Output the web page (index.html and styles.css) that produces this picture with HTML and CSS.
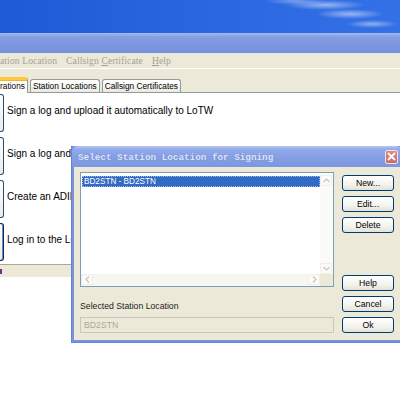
FILE: index.html
```html
<!DOCTYPE html>
<html>
<head>
<meta charset="utf-8">
<link rel="stylesheet" href="styles.css">
</head>
<body>
<div class="desktop"></div>
<div class="window">
  <div class="titlebar"></div>
  <div class="menubar">
    <span class="menu">ation Location</span>
    <span class="menu">Callsign <u>C</u>ertificate</span>
    <span class="menu"><u>H</u>elp</span>
  </div>
  <div class="tabstrip">
    <div class="tab active">rations</div>
    <div class="tab">Station Locations</div>
    <div class="tab">Callsign Certificates</div>
  </div>
  <div class="pane">
    <div class="row"><div class="bigbtn"></div><span class="label">Sign a log and upload it automatically to LoTW</span></div>
    <div class="row"><div class="bigbtn"></div><span class="label">Sign a log and sa</span></div>
    <div class="row"><div class="bigbtn"></div><span class="label">Create an ADIF fi</span></div>
    <div class="row"><div class="bigbtn focus"></div><span class="label">Log in to the Log</span></div>
  </div>
  <div class="statusbar"><span class="mark"></span></div>
</div>

<div class="dialog">
  <div class="dtitle">
    <span class="dtext">Select Station Location for Signing</span>
    <span class="close">
      <svg width="9" height="9" viewBox="0 0 9 9"><path d="M1 1L8 8M8 1L1 8" stroke="#fff" stroke-width="1.8"/></svg>
    </span>
  </div>
  <div class="dbody">
    <div class="leftcol">
      <div class="listbox">
        <div class="items"><div class="item sel">BD2STN - BD2STN</div></div>
        <div class="vscroll">
          <div class="sbtn"><svg width="7" height="5" viewBox="0 0 7 5"><path d="M0.5 4L3.5 1L6.5 4" fill="none" stroke="#c6c6bd" stroke-width="1.2"/></svg></div>
          <div class="strack"></div>
          <div class="sbtn"><svg width="7" height="5" viewBox="0 0 7 5"><path d="M0.5 1L3.5 4L6.5 1" fill="none" stroke="#c6c6bd" stroke-width="1.2"/></svg></div>
        </div>
        <div class="hscroll">
          <div class="sbtn"><svg width="5" height="7" viewBox="0 0 5 7"><path d="M4 0.5L1 3.5L4 6.5" fill="none" stroke="#c6c6bd" stroke-width="1.2"/></svg></div>
          <div class="htrack"></div>
          <div class="sbtn"><svg width="5" height="7" viewBox="0 0 5 7"><path d="M1 0.5L4 3.5L1 6.5" fill="none" stroke="#c6c6bd" stroke-width="1.2"/></svg></div>
        </div>
        <div class="corner"></div>
      </div>
      <div class="sellabel">Selected Station Location</div>
      <div class="field">BD2STN</div>
    </div>
    <div class="rightcol">
      <div class="group">
        <div class="btn">New...</div>
        <div class="btn">Edit...</div>
        <div class="btn">Delete</div>
      </div>
      <div class="group lower">
        <div class="btn">Help</div>
        <div class="btn">Cancel</div>
        <div class="btn">Ok</div>
      </div>
    </div>
  </div>
</div>
</body>
</html>
```

FILE: styles.css
```css
html, body {
  margin: 0;
  padding: 0;
}
body {
  width: 400px;
  height: 395px;
  overflow: hidden;
  background: #ffffff;
  position: relative;
  font-family: "Liberation Sans", Arial, sans-serif;
  font-size: 8.7px;
  color: #000;
}
.desktop {
  height: 33px;
  background:
    radial-gradient(ellipse 40px 5px at 325px 5px, rgba(255,255,255,0.5), rgba(255,255,255,0) 100%),
    radial-gradient(ellipse 34px 5px at 350px 14px, rgba(255,255,255,0.5), rgba(255,255,255,0) 100%),
    radial-gradient(ellipse 26px 4px at 372px 24px, rgba(255,255,255,0.45), rgba(255,255,255,0) 100%),
    radial-gradient(ellipse 30px 4px at 295px 1px, rgba(255,255,255,0.35), rgba(255,255,255,0) 100%),
    linear-gradient(90deg, #1f5ad6 0%, #2a66df 50%, #3471e6 100%);
}
.window {
  display: flex;
  flex-direction: column;
}
.titlebar {
  height: 20px;
  background: linear-gradient(180deg, #a3b9ef 0%, #849ee3 20%, #7b97e0 60%, #7490dc 100%);
}
.menubar {
  height: 15px;
  background: #ece9d8;
  border-bottom: 1px solid #ffffff;
  display: flex;
  align-items: center;
  gap: 9px;
}
.menu {
  font-family: "Liberation Serif", "Times New Roman", serif;
  font-size: 9.6px;
  color: #a5a397;
  letter-spacing: 0.1px;
}
.tabstrip {
  height: 23px;
  background: #ece9d8;
  display: flex;
  align-items: flex-end;
  gap: 2px;
}
.tab {
  height: 13px;
  box-sizing: border-box;
  border: 1px solid #919b9c;
  border-bottom: none;
  border-radius: 3px 3px 0 0;
  background: linear-gradient(180deg, #ffffff 0%, #f7f7f3 50%, #e9e8e1 100%);
  padding: 0 2px;
  line-height: 12px;
  font-size: 8.3px;
}
.tab.active {
  height: 16px;
  width: 28px;
  border-left: none;
  border-radius: 0 3px 0 0;
  border-top: 3px solid #ffc83c;
  background: #ffffff;
  text-align: right;
  padding: 0 3px 0 0;
  line-height: 13px;
  margin-bottom: -1px;
  position: relative;
  box-shadow: inset 0 1px 0 #f0b030;
}
.pane {
  height: 170px;
  border-top: 1px solid #919b9c;
  background: #ffffff;
  padding-top: 1px;
  display: flex;
  flex-direction: column;
  gap: 5px;
}
.row {
  height: 38px;
  display: flex;
  align-items: center;
  gap: 3px;
}
.bigbtn {
  flex: none;
  width: 3px;
  height: 36px;
  border: 1px solid #2b4a78;
  border-left: none;
  border-radius: 0 3px 3px 0;
  background: linear-gradient(180deg, #ffffff, #ecebe4);
}
.bigbtn.focus {
  border-color: #0f2850;
  box-shadow: inset -1px 0 0 #6a8bd0;
}
.label {
  white-space: nowrap;
  padding-bottom: 5px;
  font-size: 10px;
}
.statusbar {
  height: 12px;
  border-top: 1px solid #aca899;
  background: #ece9d8;
  display: flex;
  align-items: center;
}
.mark {
  width: 2px;
  height: 5px;
  background: #7a2a88;
}

/* dialog */
.dialog {
  position: absolute;
  left: 71px;
  top: 146px;
  width: 332px;
  height: 197px;
  box-sizing: border-box;
  background: #7b93df;
  border: 1px solid #6a82d4;
  border-top: none;
  padding: 0 2px 2px 2px;
  display: flex;
  flex-direction: column;
}
.dtitle {
  height: 21px;
  margin: 0 -2px;
  border-radius: 6px 6px 0 0;
  background: linear-gradient(180deg, #b4c6f2 0%, #93abea 15%, #869fe4 50%, #7c97e0 100%);
  display: flex;
  align-items: center;
  padding-left: 6px;
  padding-right: 4px;
}
.dtext {
  flex: 1;
  font-family: "Liberation Mono", "Courier New", monospace;
  font-weight: bold;
  font-size: 9.3px;
  color: #dbe5fa;
  text-shadow: 0 0 1px rgba(90,110,190,0.6);
  padding-top: 1px;
}
.close {
  width: 13px;
  height: 14px;
  box-sizing: border-box;
  border: 1px solid #f2e2e2;
  border-radius: 2px;
  background: linear-gradient(180deg, #dc8c8c, #c86a6a);
  display: flex;
  align-items: center;
  justify-content: center;
}
.dbody {
  flex: 1;
  background: #ece9d8;
  display: flex;
  padding: 5px 0 0 6px;
  gap: 8px;
}
.leftcol {
  width: 254px;
  display: flex;
  flex-direction: column;
}
.listbox {
  height: 115px;
  box-sizing: border-box;
  border: 1px solid #7f9db9;
  background: #ffffff;
  display: grid;
  grid-template-columns: 1fr 13px;
  grid-template-rows: 1fr 12px;
}
.items {
  padding: 3px 0 0 1px;
}
.item {
  height: 11px;
  line-height: 11px;
  padding-left: 2px;
  white-space: nowrap;
  font-size: 8.2px;
}
.item.sel {
  background: #316ac5;
  color: #ffffff;
  outline: 1px dotted #9fb8e6;
  outline-offset: -1px;
}
.vscroll {
  display: flex;
  flex-direction: column;
  background: #fbfbf8;
  padding-top: 2px;
}
.hscroll {
  display: flex;
  background: #f7f7f2;
}
.sbtn {
  width: 12px;
  height: 11px;
  box-sizing: border-box;
  border: 1px solid #efeee8;
  border-radius: 2px;
  background: #fbfbf9;
  display: flex;
  align-items: center;
  justify-content: center;
}
.strack, .htrack {
  flex: 1;
}
.corner {
  background: #ece9d8;
}
.sellabel {
  margin-top: 13px;
  height: 12px;
  line-height: 12px;
  color: #1c1c1c;
}
.field {
  margin-top: 5px;
  height: 16px;
  box-sizing: border-box;
  border: 1px solid #c9c7ba;
  background: #ece9d8;
  color: #aca899;
  line-height: 14px;
  padding-left: 3px;
}
.rightcol {
  width: 52px;
  padding-top: 3px;
  display: flex;
  flex-direction: column;
}
.group {
  display: flex;
  flex-direction: column;
  gap: 5px;
}
.group.lower {
  margin-top: 42px;
}
.btn {
  height: 16px;
  box-sizing: border-box;
  border: 1px solid #003c74;
  border-radius: 3px;
  background: linear-gradient(180deg, #ffffff 0%, #f4f3ee 60%, #e4e2d6 100%);
  text-align: center;
  line-height: 14px;
  font-size: 8.7px;
}
```
